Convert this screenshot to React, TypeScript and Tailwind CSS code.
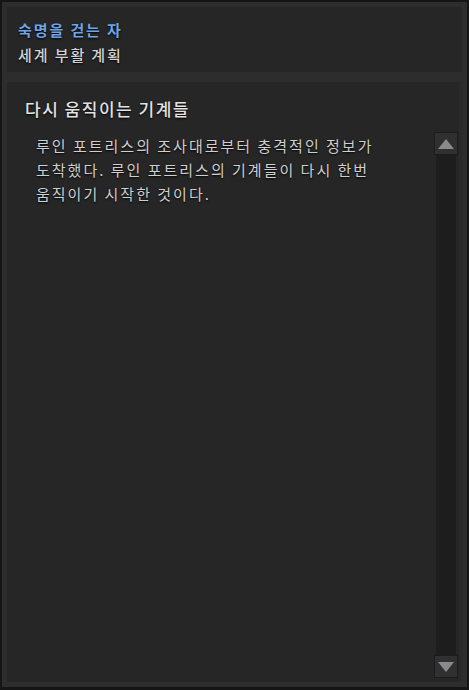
const FONT = "font-['Noto_Sans_CJK_KR','Noto_Sans',sans-serif]";

function ScrollButton({ dir }: { dir: "up" | "down" }) {
  return (
    <div className="w-[24px] h-[23px] bg-[#303030] border border-[#1c1c1c] flex items-center justify-center shrink-0">
      <svg width="16" height="10" viewBox="0 0 16 10">
        {dir === "up" ? (
          <polygon points="8,0 16,10 0,10" fill="#8a8990" />
        ) : (
          <polygon points="0,0 16,0 8,10" fill="#8a8990" />
        )}
      </svg>
    </div>
  );
}

export default function App() {
  return (
    <div
      className={`w-[469px] h-[690px] bg-[#151515] pt-[2px] pl-[2px] pr-[2px] pb-[3px] ${FONT}`}
    >
      <div className="h-full bg-[#2d2d2d] p-[5px] flex flex-col gap-[10px]">
        {/* header */}
        <div className="h-[65px] bg-[#262626] px-[11px] pt-[11px] tracking-[1.9px] [text-shadow:0_1px_2px_#000]">
          <div className="text-[15px] leading-[24px] font-semibold text-[#6ea4e6]">
            숙명을 걷는 자
          </div>
          <div className="mt-[1px] text-[15px] leading-[24px] font-medium text-[#d4d4d4]">
            세계 부활 계획
          </div>
        </div>

        {/* content */}
        <div className="flex-1 bg-[#262626] flex border-r-[3px] border-[#2a2a2a]">
          <div className="flex-1 pl-[18px] pt-[15px] [text-shadow:0_1px_2px_#000]">
            <h2 className="text-[17px] leading-[24px] font-medium tracking-[1.5px] text-[#e2e2e2]">
              다시 움직이는 기계들
            </h2>
            <p className="mt-[13px] pl-[11px] w-[356px] text-[15px] leading-[24px] tracking-[2px] text-[#cfcfcf]">
              루인 포트리스의 조사대로부터 충격적인 정보가 도착했다. 루인
              포트리스의 기계들이 다시 한번 움직이기 시작한 것이다.
            </p>
          </div>
          <div className="flex flex-col items-center mt-[50px] mb-[4px] mr-[1px]">
            <ScrollButton dir="up" />
            <div className="flex-1 w-[20px] bg-[#1d1d1d]" />
            <ScrollButton dir="down" />
          </div>
        </div>
      </div>
    </div>
  );
}
